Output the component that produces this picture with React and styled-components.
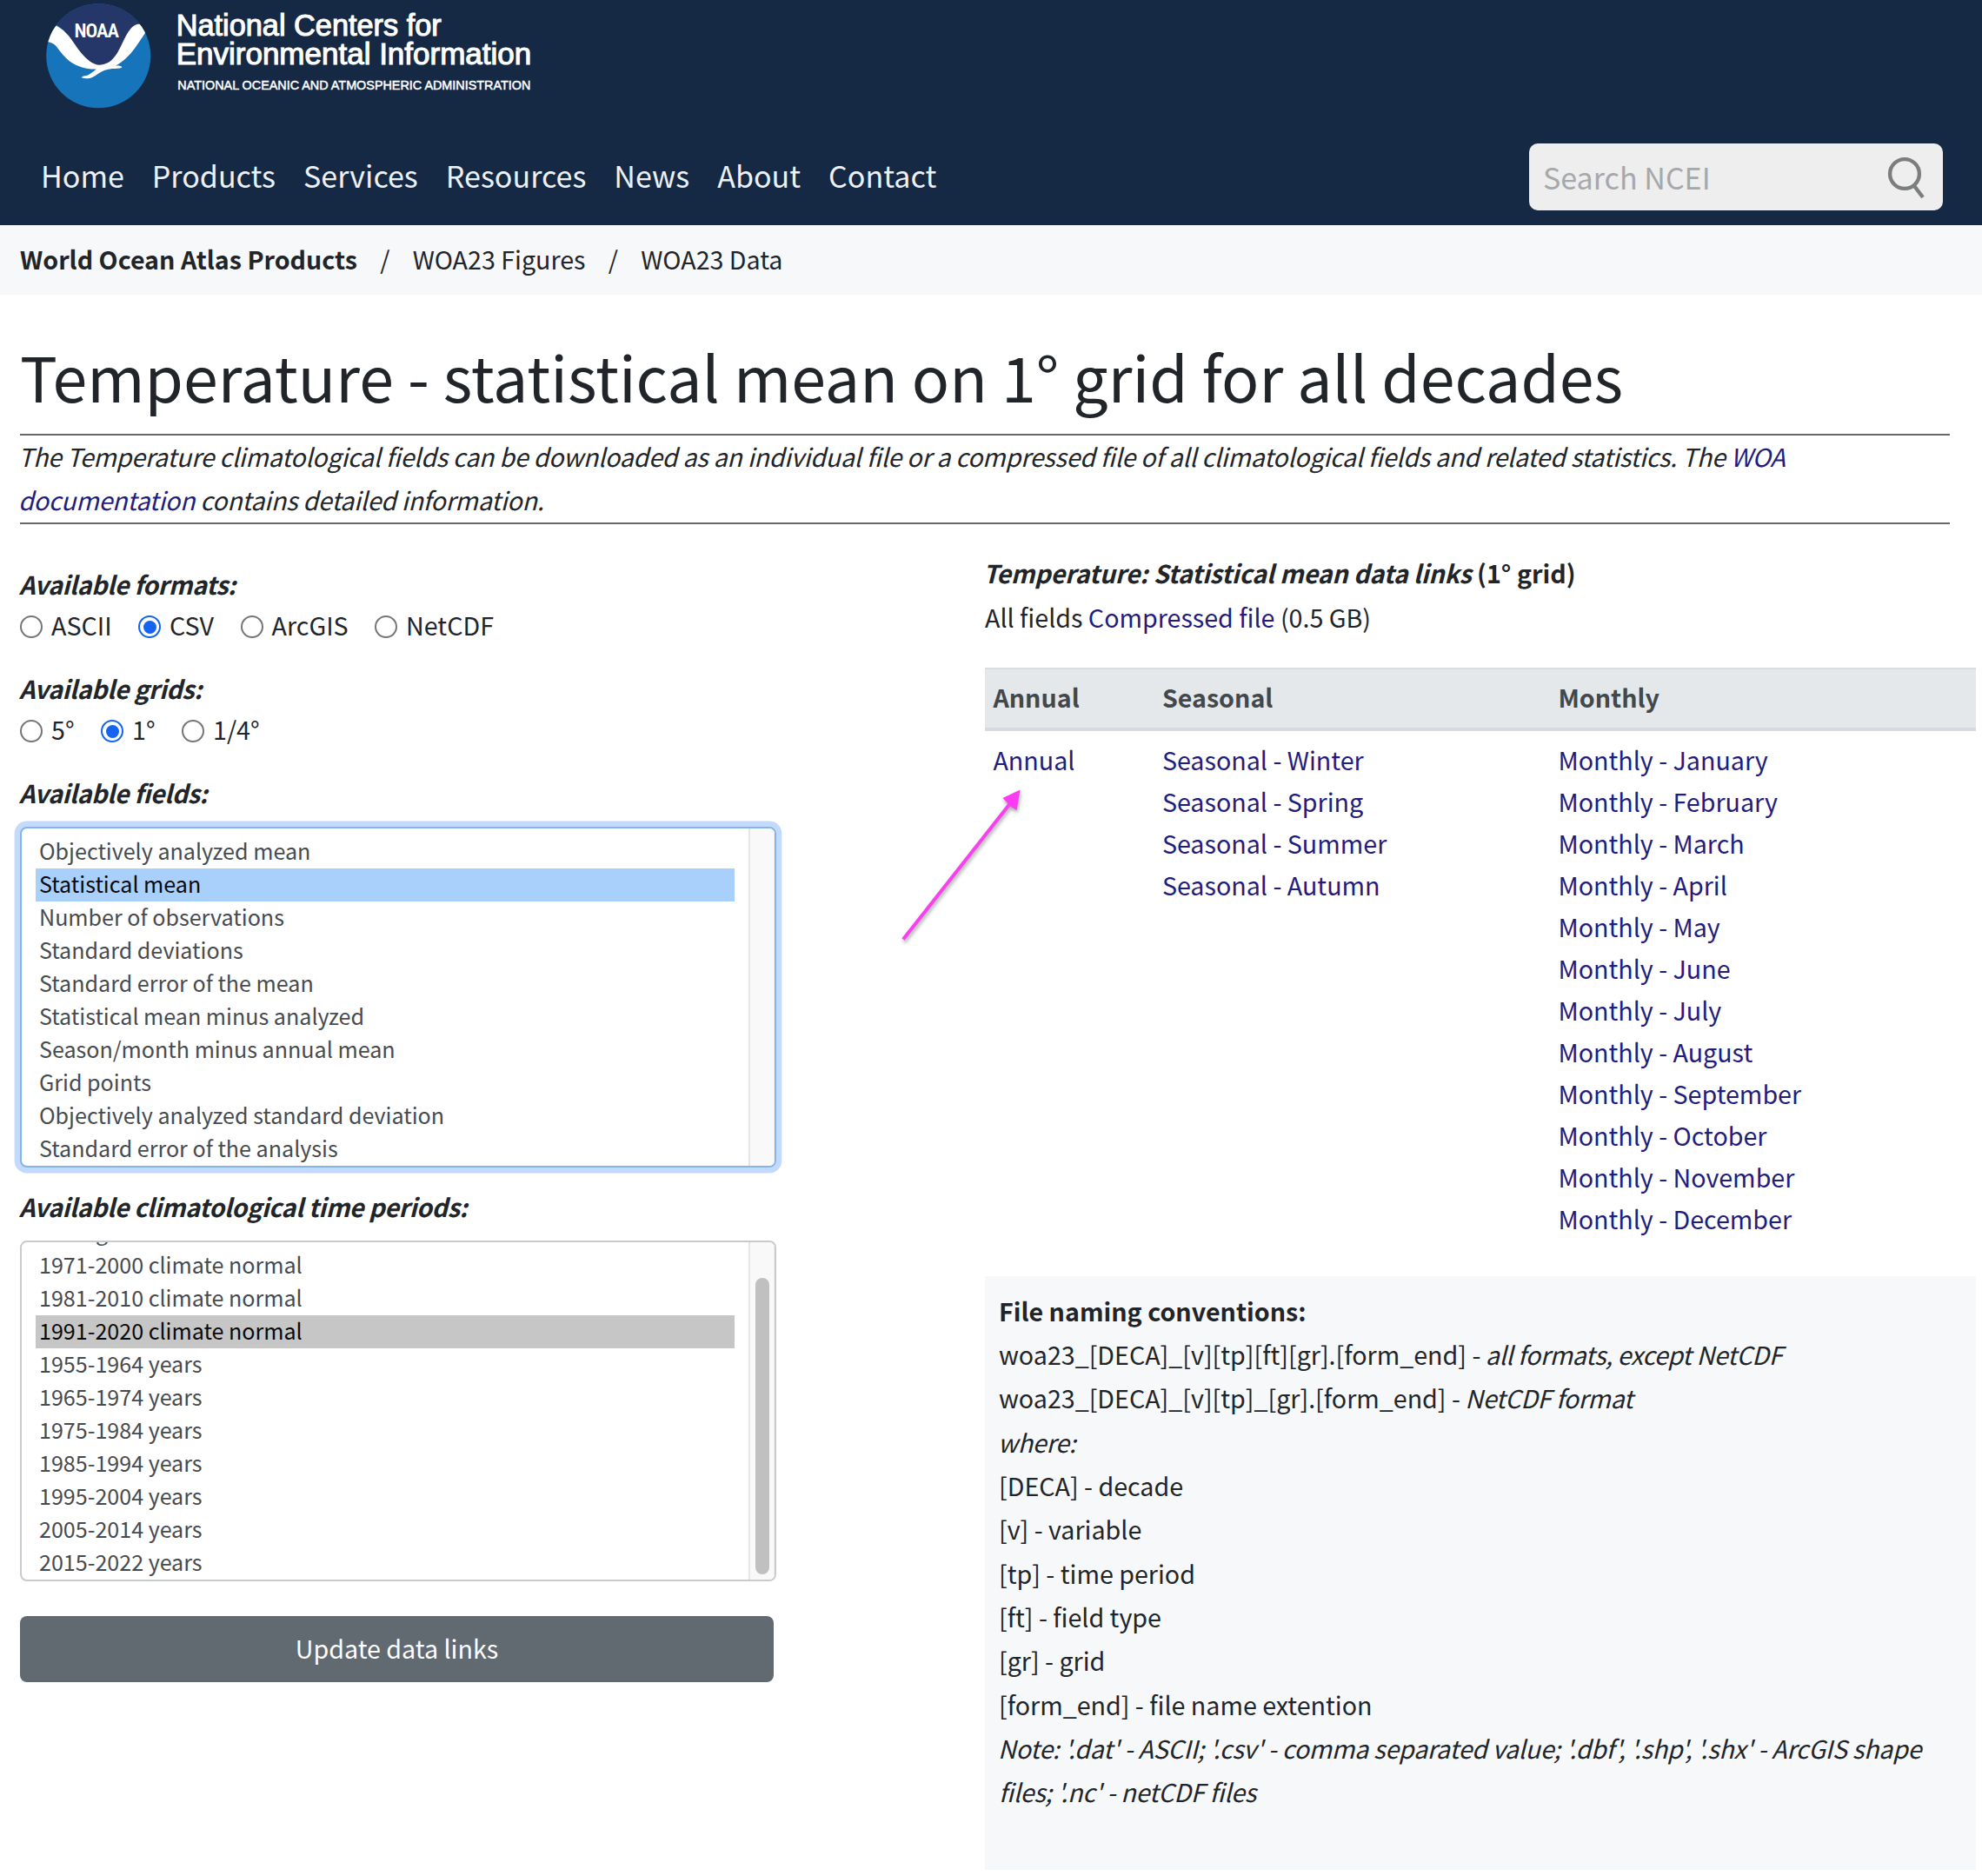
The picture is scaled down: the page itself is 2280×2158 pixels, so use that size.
import React from "react";
import styled, { createGlobalStyle } from "styled-components";

const sans = '"Noto Sans CJK SC", "Noto Sans", sans-serif';

const GlobalStyle = createGlobalStyle`
  *, *::before, *::after { box-sizing: border-box; }
  body {
    margin: 0;
    background: #fff;
    color: #212529;
    font-family: ${sans};
    font-size: 28.65px;
    line-height: 48px;
  }
`;

const Page = styled.div`
  position: relative;
  width: 2280px;
  height: 2158px;
  overflow: hidden;
`;

/* Header */

const Header = styled.header`
  display: flex;
  flex-direction: column;
  justify-content: space-between;
  height: 259px;
  background: #152944;
`;

const Brand = styled.a`
  display: flex;
  align-items: flex-start;
  gap: 31px;
  padding: 4px 0 0 52.5px;
`;

const Seal = styled.svg`
  display: block;
  width: 121px;
  height: 121px;
`;

const Wordmark = styled.svg`
  display: block;
  width: 420px;
  height: 112px;
  overflow: visible;
  fill: #fff;
  stroke: #fff;
  font-family: "Liberation Sans", sans-serif;
  font-weight: 400;
`;

const Toolbar = styled.div`
  display: flex;
  align-items: center;
  justify-content: space-between;
  padding: 0 45px 17px 47px;
`;

const Nav = styled.nav`
  display: flex;
  gap: 32px;
  margin-top: -3px;
`;

const NavLink = styled.a`
  color: #edf1f6;
  font-size: 34.05px;
`;

const SearchBox = styled.div`
  display: flex;
  align-items: center;
  justify-content: space-between;
  width: 476px;
  height: 77px;
  padding: 0 20px 0 16px;
  border-radius: 10px;
  background: #eee;
`;

const Placeholder = styled.span`
  color: #a6a8ac;
  font-size: 34.05px;
`;

const SearchIcon = styled.svg`
  display: block;
  width: 44px;
  height: 50px;
  fill: none;
  stroke: #7c7d7d;
`;

/* Breadcrumb */

const Breadcrumb = styled.div`
  display: flex;
  gap: 26.3px;
  height: 80px;
  padding: 15px 0 0 23px;
  background: #f7f8fa;
`;

const Crumb = styled.span`
  font-weight: ${(p) => (p.$strong ? 700 : 400)};
`;

/* Main */

const Main = styled.main`
  padding: 45px 0 0 23px;
`;

const Title = styled.h1`
  margin: 0 0 19px;
  font-size: 71.63px;
  font-weight: 400;
  line-height: 96px;
`;

const Intro = styled.div`
  width: 2220px;
  height: 104px;
  border: solid #66696c;
  border-width: 2px 0;
`;

const IntroText = styled.p`
  margin: -1px 0 0 -2px;
  padding-right: 40px;
  font-style: italic;
  letter-spacing: -0.24px;
  line-height: 50px;
`;

const Link = styled.a`
  color: #241c7c;
`;

const Columns = styled.div`
  display: grid;
  grid-template-columns: 870px 1140px;
  column-gap: 240px;
`;

const Form = styled.form`
  display: flex;
  flex-direction: column;
  padding-top: 44px;
`;

const Label = styled.div`
  height: 48px;
  margin-left: -1px;
  padding-top: 1px;
  font-style: italic;
  font-weight: 700;
  letter-spacing: -0.38px;
`;

const RadioRow = styled.div`
  display: flex;
  gap: 30.5px;
  margin-bottom: 24px;
`;

const RadioLabel = styled.label`
  display: flex;
  align-items: center;
  gap: 10px;
`;

const Dot = styled.span`
  width: 26px;
  height: 26px;
  margin-top: 4px;
  border: 2px solid ${(p) => (p.$on ? "#1464f0" : "#767676")};
  border-radius: 50%;
  background: ${(p) => (p.$on ? "#1464f0" : "#fff")};
  background-clip: content-box;
  padding: 3.5px;
`;

const ListBox = styled.div`
  display: flex;
  justify-content: space-between;
  height: 392px;
  margin: 16px 0 20px;
  border: 2px solid ${(p) => (p.$focused ? "#86b3e8" : "#c8cacd")};
  border-radius: 8px;
  background: #fff;
  box-shadow: ${(p) => (p.$focused ? "0 0 0 6.4px #c2dafd" : "none")};
  overflow: hidden;
`;

const Options = styled.div`
  display: flex;
  flex-direction: column;
  justify-content: flex-end;
  width: 804px;
  margin-left: 16px;
`;

const Option = styled.div`
  flex: none;
  height: 38px;
  padding-left: 4px;
  color: ${(p) => (p.$selected ? "#0a0a0a" : "#474b50")};
  background: ${(p) => p.$selected || "transparent"};
  font-size: 25.08px;
  line-height: 34px;
`;

const Track = styled.div`
  width: 30px;
  padding: 41px 4px 6px 6px;
  border-left: 2px solid #e6e6e6;
  border-right: 1px solid #ededed;
  background: #f9f9f9;
`;

const Thumb = styled.div`
  width: 16px;
  height: 341px;
  border-radius: 8px;
  background: #c0c0c0;
`;

const Submit = styled.button`
  width: 867px;
  height: 76px;
  margin-top: 20px;
  padding: 0 0 2px;
  border: 0;
  border-radius: 8px;
  background: #626a71;
  color: #fff;
  font: inherit;
`;

const Results = styled.section`
  padding-top: 31px;
`;

const ResultsHead = styled.div`
  line-height: 50.6px;
`;

const Strong = styled.b`
  margin-left: ${(p) => (p.$italic ? "-2px" : "0")};
  font-style: ${(p) => (p.$italic ? "italic" : "normal")};
  letter-spacing: ${(p) => (p.$italic ? "-0.15px" : "0")};
`;

const Table = styled.div`
  margin-top: 33px;
`;

const TableRow = styled.div`
  display: grid;
  grid-template-columns: 194.5px 455.5px 1fr;
`;

const TableHead = styled(TableRow)`
  height: 73px;
  padding-top: 8px;
  border-top: 2px solid #d9dce0;
  border-bottom: 4px solid #d7dadf;
  background: #e4e8eb;
  color: #43484c;
  font-weight: 700;
`;

const TableBody = styled(TableRow)`
  padding-top: 9px;
`;

const Cell = styled.div`
  display: flex;
  flex-direction: column;
  padding-left: 9.4px;
`;

const Conventions = styled.div`
  height: 683px;
  margin-top: 42px;
  padding: 14.5px 16px 0 16px;
  background: #f7f8fa;
  line-height: 50.33px;
`;

const Em = styled.em`
  margin-left: -1px;
  letter-spacing: ${(p) => p.$track || "-0.25px"};
`;

const Pointer = styled.svg`
  position: absolute;
  left: 1029px;
  top: 900px;
  width: 160px;
  height: 200px;
  filter: drop-shadow(1px 3px 2px rgba(0, 0, 0, 0.35));
`;

const NAV = ["Home", "Products", "Services", "Resources", "News", "About", "Contact"];
const FIELDS = [
  "Objectively analyzed mean",
  "Statistical mean",
  "Number of observations",
  "Standard deviations",
  "Standard error of the mean",
  "Statistical mean minus analyzed",
  "Season/month minus annual mean",
  "Grid points",
  "Objectively analyzed standard deviation",
  "Standard error of the analysis",
];
const PERIODS = [
  "Averaged decades",
  "1971-2000 climate normal",
  "1981-2010 climate normal",
  "1991-2020 climate normal",
  "1955-1964 years",
  "1965-1974 years",
  "1975-1984 years",
  "1985-1994 years",
  "1995-2004 years",
  "2005-2014 years",
  "2015-2022 years",
];
const SEASONS = ["Winter", "Spring", "Summer", "Autumn"];
const MONTHS = [
  "January", "February", "March", "April", "May", "June",
  "July", "August", "September", "October", "November", "December",
];
const TERMS = [
  ["[DECA]", "decade"],
  ["[v]", "variable"],
  ["[tp]", "time period"],
  ["[ft]", "field type"],
  ["[gr]", "grid"],
  ["[form_end]", "file name extention"],
];

function Radios({ items, value }) {
  return (
    <RadioRow>
      {items.map((t) => (
        <RadioLabel key={t}>
          <Dot $on={t === value} />
          {t}
        </RadioLabel>
      ))}
    </RadioRow>
  );
}

const SealText = styled.text`
  fill: #fff;
  font-family: Roboto, sans-serif;
  font-size: 22.8px;
  font-stretch: 75%;
  font-weight: 600;
`;

function NoaaSeal() {
  return (
    <Seal viewBox="0 0 121 121" role="img">
      <defs>
        <clipPath id="disc"><circle cx="60.2" cy="60.2" r="60" /></clipPath>
      </defs>
      <g clipPath="url(#disc)">
        <rect width="121" height="121" fill="#1674bb" />
        <path
          fill="#253668"
          d="M0 0H121V30L107 24C101 26 96 31 93 36L84 55C78 65 71 71 61 72C46 69 38 56 32 46C26 38 19 28 11 24L0 22Z"
        />
        <path
          fill="#fff"
          d="M11.5 25.5C20 29.5 26.5 37 32.4 46C38 54.5 43 61 50 66.3C54 69.3 58 70.7 61.4 70.7C66 70.7 72 68.5 76 64.5C83 57.5 86 48.5 90.5 40C94 33 98 27 102 25C104 24 105.5 23.7 108 23.8L115 32.5C111 38.500 107 44.5 102.4 51C96 59.5 89 67 80 71.5C83 71.3 87.5 71.8 87.2 73.3C87 75 80 75 76 75C70 75.4 65 77.7 60 80.7C54.5 84.5 51.5 86.5 46 86.3C42.5 86.2 40.5 85.3 41 84.5C42.5 83.2 46.5 83.2 49.5 81.7C53 79.8 55.5 77.5 57.8 75.6C45 75.8 35.5 72 29 67.7C21.5 62.5 16 55 12 49.5C8.5 45.5 5 44.5 1 44L5 34Z"
        />
        <SealText x="32.6" y="39.4" textLength="51.5" lengthAdjust="spacing">NOAA</SealText>
      </g>
    </Seal>
  );
}

export default function App() {
  return (
    <>
      <GlobalStyle />
      <Page>
        <Header>
          <Brand>
            <NoaaSeal />
            <Wordmark viewBox="0 0 420 112">
              <text x="-2.3" y="37.4" fontSize="34.5" strokeWidth="1.1" textLength="305" lengthAdjust="spacingAndGlyphs">National Centers for</text>
              <text x="-2.3" y="70" fontSize="34.5" strokeWidth="1.1" textLength="408.5" lengthAdjust="spacingAndGlyphs">Environmental Information</text>
              <text x="-0.7" y="99" fontSize="15.3" strokeWidth="0.5" textLength="406" lengthAdjust="spacingAndGlyphs">NATIONAL OCEANIC AND ATMOSPHERIC ADMINISTRATION</text>
            </Wordmark>
          </Brand>
          <Toolbar>
            <Nav>
              {NAV.map((t) => <NavLink key={t}>{t}</NavLink>)}
            </Nav>
            <SearchBox>
              <Placeholder>Search NCEI</Placeholder>
              <SearchIcon viewBox="0 0 44 50">
                <circle cx="20" cy="21" r="16.9" strokeWidth="4.4" />
                <path d="M30 33.5L41 48" strokeWidth="4.4" />
              </SearchIcon>
            </SearchBox>
          </Toolbar>
        </Header>

        <Breadcrumb>
          <Crumb $strong>World Ocean Atlas Products</Crumb>
          <Crumb>/</Crumb>
          <Crumb>WOA23 Figures</Crumb>
          <Crumb>/</Crumb>
          <Crumb>WOA23 Data</Crumb>
        </Breadcrumb>

        <Main>
          <Title>Temperature - statistical mean on 1° grid for all decades</Title>
          <Intro>
            <IntroText>
              The Temperature climatological fields can be downloaded as an individual file or a
              compressed file of all climatological fields and related statistics. The{" "}
              <Link>WOA documentation</Link> contains detailed information.
            </IntroText>
          </Intro>

          <Columns>
            <Form>
              <Label>Available formats:</Label>
              <Radios items={["ASCII", "CSV", "ArcGIS", "NetCDF"]} value="CSV" />
              <Label>Available grids:</Label>
              <Radios items={["5°", "1°", "1/4°"]} value="1°" />
              <Label>Available fields:</Label>
              <ListBox $focused>
                <Options>
                  {FIELDS.map((t) => (
                    <Option key={t} $selected={t === "Statistical mean" && "#a9cffb"}>{t}</Option>
                  ))}
                </Options>
                <Track />
              </ListBox>
              <Label>Available climatological time periods:</Label>
              <ListBox>
                <Options>
                  {PERIODS.map((t) => (
                    <Option key={t} $selected={t.startsWith("1991") && "#c6c6c6"}>{t}</Option>
                  ))}
                </Options>
                <Track><Thumb /></Track>
              </ListBox>
              <Submit type="button">Update data links</Submit>
            </Form>

            <Results>
              <ResultsHead>
                <div>
                  <Strong $italic>Temperature: Statistical mean data links</Strong>
                  <Strong> (1° grid)</Strong>
                </div>
                <div>All fields <Link>Compressed file</Link> (0.5 GB)</div>
              </ResultsHead>
              <Table>
                <TableHead>
                  <Cell>Annual</Cell>
                  <Cell>Seasonal</Cell>
                  <Cell>Monthly</Cell>
                </TableHead>
                <TableBody>
                  <Cell><Link>Annual</Link></Cell>
                  <Cell>{SEASONS.map((s) => <Link key={s}>Seasonal - {s}</Link>)}</Cell>
                  <Cell>{MONTHS.map((m) => <Link key={m}>Monthly - {m}</Link>)}</Cell>
                </TableBody>
              </Table>
              <Conventions>
                <div><Strong>File naming conventions:</Strong></div>
                <div>woa23_[DECA]_[v][tp][ft][gr].[form_end] - <Em $track="-0.38px">all formats, except NetCDF</Em></div>
                <div>woa23_[DECA]_[v][tp]_[gr].[form_end] - <Em $track="-0.38px">NetCDF format</Em></div>
                <div><Em>where:</Em></div>
                {TERMS.map(([k, v]) => <div key={k}>{k} - {v}</div>)}
                <div>
                  <Em>
                    Note: '.dat' - ASCII; '.csv' - comma separated value; '.dbf', '.shp', '.shx' -
                    ArcGIS shape files; '.nc' - netCDF files
                  </Em>
                </div>
              </Conventions>
            </Results>
          </Columns>
        </Main>

        <Pointer viewBox="0 0 160 200">
          <path d="M10 180.5L134 23" stroke="#f840ee" strokeWidth="4" fill="none" />
          <path d="M144.500 8.5L140.5 32L133.5 27.5L124.5 18Z" fill="#fb3cf2" />
        </Pointer>
      </Page>
    </>
  );
}
